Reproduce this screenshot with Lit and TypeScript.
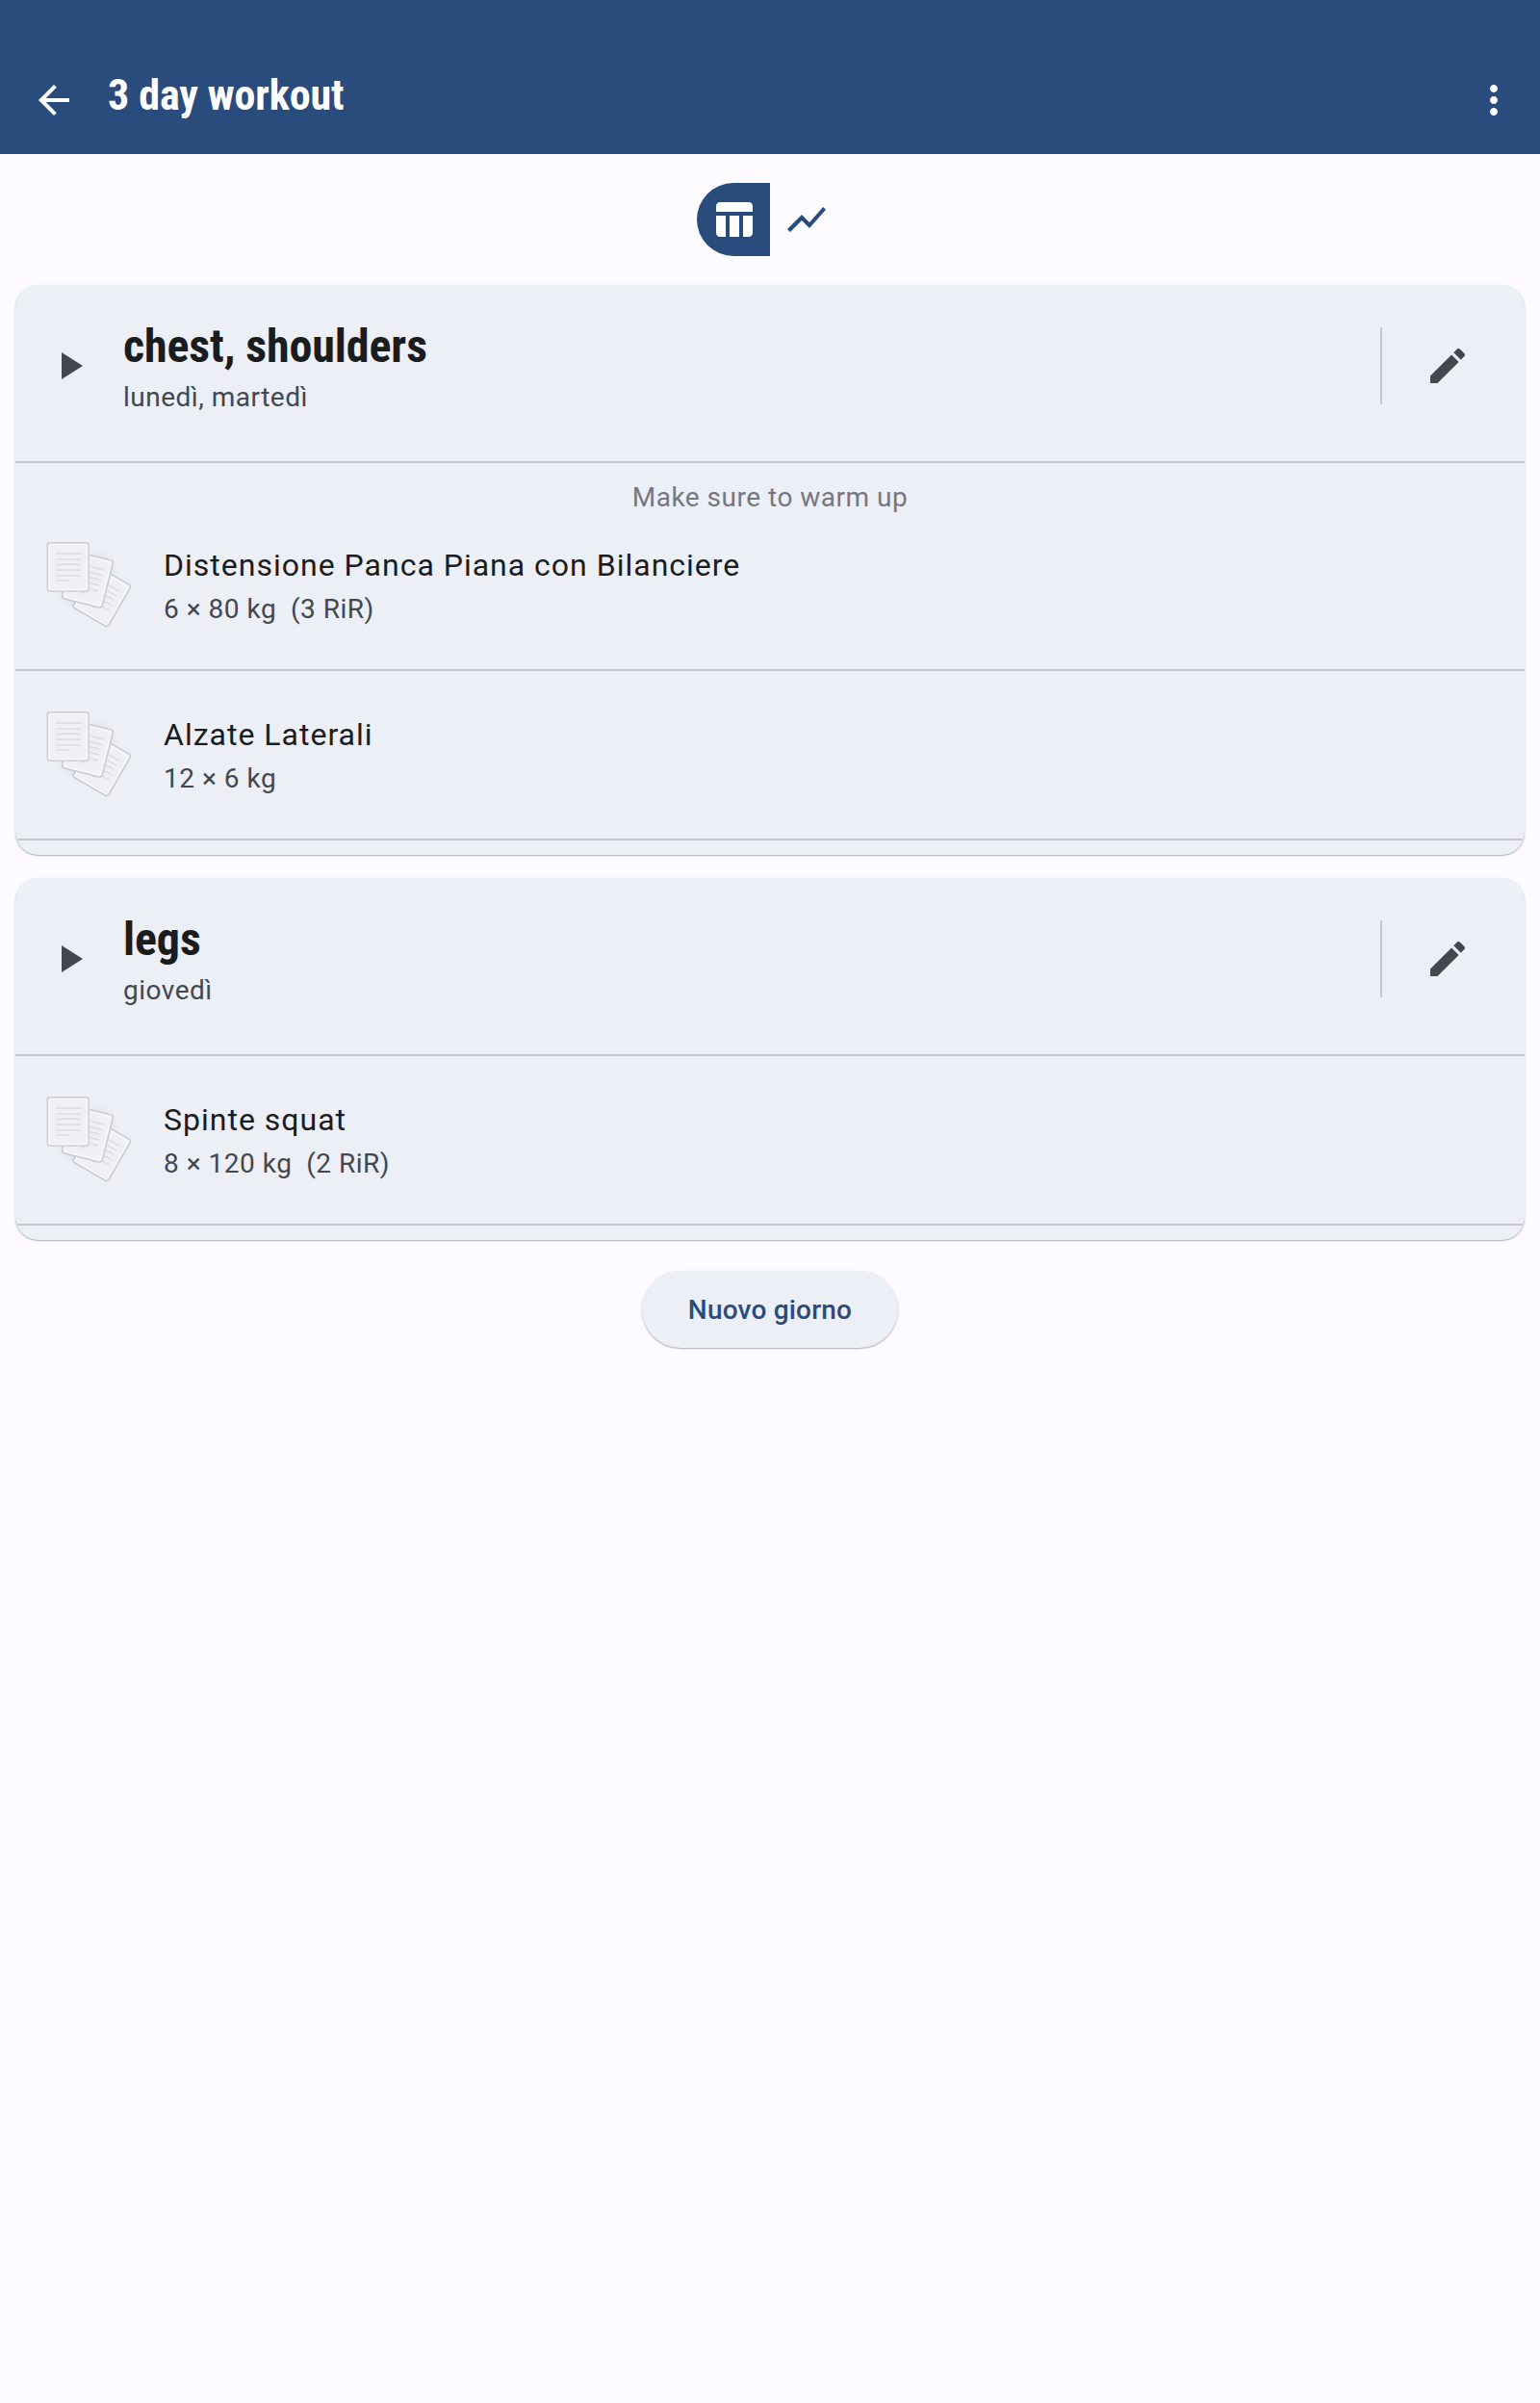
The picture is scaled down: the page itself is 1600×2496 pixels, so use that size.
import { LitElement, html, css, svg, nothing } from "lit";
import { customElement, property } from "lit/decorators.js";

interface Exercise {
  name: string;
  sets: string;
}

interface Day {
  title: string;
  weekdays: string;
  note?: string;
  exercises: Exercise[];
}

const ICONS = {
  back: "M20 11H7.83l5.59-5.59L12 4l-8 8 8 8 1.41-1.41L7.83 13H20v-2z",
  more: "M12 8c1.1 0 2-.9 2-2s-.9-2-2-2-2 .9-2 2 .9 2 2 2zm0 2c-1.1 0-2 .9-2 2s.9 2 2 2 2-.9 2-2-.9-2-2-2zm0 6c-1.1 0-2 .9-2 2s.9 2 2 2 2-.9 2-2-.9-2-2-2z",
  table:
    "M10 10.02h5V21h-5V10.02zM17 21h3c1.1 0 2-.9 2-2v-9h-5v11zm3-18H5c-1.1 0-2 .9-2 2v3h19V5c0-1.1-.9-2-2-2zM3 19c0 1.1.9 2 2 2h3V10H3v9z",
  chart: "M3.5 18.49l6-6.01 4 4L22 6.92l-1.41-1.41-7.09 7.97-4-4L2 16.99z",
  play: "M8 5v14l11-7z",
  edit: "M3 17.25V21h3.75L17.81 9.94l-3.75-3.75L3 17.25zM20.71 7.04c.39-.39.39-1.02 0-1.41l-2.34-2.34c-.39-.39-1.02-.39-1.41 0l-1.83 1.83 3.75 3.75 1.83-1.83z",
};

const icon = (name: keyof typeof ICONS) =>
  html`<svg width="48" height="48" viewBox="0 0 24 24" fill="currentColor"><path d=${ICONS[name]}></path></svg>`;

const DAYS: Day[] = [
  {
    title: "chest, shoulders",
    weekdays: "lunedì, martedì",
    note: "Make sure to warm up",
    exercises: [
      { name: "Distensione Panca Piana con Bilanciere", sets: "6 × 80 kg  (3 RiR)" },
      { name: "Alzate Laterali", sets: "12 × 6 kg" },
    ],
  },
  {
    title: "legs",
    weekdays: "giovedì",
    exercises: [{ name: "Spinte squat", sets: "8 × 120 kg  (2 RiR)" }],
  },
];

/* One sheet of paper, 43 × 51, with six text lines. */
const sheet = (transform: string, border: string) => svg`
  <g transform=${transform}>
    <rect x="0" y="0" width="43" height="50.5" rx="3" fill="#f4f5f8" stroke=${border} stroke-width="1.5"></rect>
    <rect x="3" y="3" width="37" height="44.5" fill="#eff0f3"></rect>
    <path d="M8.5 11.3h26.5M8.5 17.2h26.5M8.5 22.5h26.5M8.5 28.3h26.5M8.5 34.2h26.5M8.5 39.3h13.5"
      stroke="#dcdde1" stroke-width="1.7" fill="none"></path>
  </g>`;

@customElement("exercise-row")
export class ExerciseRow extends LitElement {
  @property({ attribute: false }) exercise!: Exercise;
  @property({ type: Boolean, reflect: true }) compact = false;

  static styles = css`
    :host {
      display: flex;
      gap: 32px;
      box-sizing: border-box;
      height: 176px;
      padding: 41px 32px 0;
      border-bottom: 2px solid #c3c6cf;
    }
    :host([compact]) {
      height: 161px;
      padding-top: 26px;
    }
    .thumb {
      flex: none;
      width: 90px;
      height: 90px;
    }
    .text {
      padding-top: 1px;
    }
    .name {
      font-size: 32px;
      line-height: 48px;
      letter-spacing: 1px;
      color: #1a1c1e;
    }
    .sets {
      margin-top: 2px;
      font-size: 28px;
      line-height: 40px;
      letter-spacing: 0.5px;
      color: #43474e;
      white-space: pre;
    }
  `;

  render() {
    return html`
      <svg class="thumb" viewBox="0 0 90 90">
        <defs>
          <filter id="soft" x="-30%" y="-30%" width="160%" height="160%">
            <feGaussianBlur stdDeviation="4"></feGaussianBlur>
          </filter>
        </defs>
        <path d="M20 20L58 14 72 32 58 70 30 70 14 54z" fill="#5a6270" opacity=".08" filter="url(#soft)"></path>
        ${sheet("translate(52 25.6) rotate(30) scale(.98)", "#c8c9cd")}
        ${sheet("translate(28.2 10.2) rotate(14)", "#c8c9cd")}
        ${sheet("translate(1.2 1.8)", "#cdced2")}
      </svg>
      <div class="text">
        <div class="name">${this.exercise.name}</div>
        <div class="sets">${this.exercise.sets}</div>
      </div>
    `;
  }
}

@customElement("day-card")
export class DayCard extends LitElement {
  @property({ attribute: false }) day!: Day;

  static styles = css`
    :host {
      display: block;
      border-radius: 24px;
      background: #eceff6;
      overflow: hidden;
      padding-bottom: 15px;
      box-shadow: 0 1px 1px rgba(0, 0, 0, 0.22), 0 1px 3px rgba(0, 0, 0, 0.12);
    }
    .head {
      display: flex;
      box-sizing: border-box;
      height: 185px;
      padding: 44px 56px 0 32px;
      border-bottom: 2px solid #c3c6cf;
      color: #43474e;
    }
    .play {
      display: flex;
      align-items: center;
      height: 80px;
      padding-right: 32px;
    }
    .info {
      flex: 1;
      margin-top: -12px;
    }
    .title {
      font: 700 48px/64px "Roboto Condensed", Roboto, sans-serif;
      font-stretch: 75%;
      letter-spacing: -0.1px;
      color: #1a1c1e;
    }
    .weekdays {
      margin-top: 1px;
      font-size: 28px;
      line-height: 40px;
      letter-spacing: 0.5px;
    }
    .edit {
      display: flex;
      align-items: center;
      height: 80px;
      padding-left: 44px;
      border-left: 2px solid #c3c6cf;
    }
    svg {
      display: block;
    }
    .note {
      padding-top: 16px;
      margin-bottom: -1px;
      text-align: center;
      font-size: 28px;
      line-height: 40px;
      letter-spacing: 0.5px;
      color: #74777f;
    }
  `;

  render() {
    const { title, weekdays, note, exercises } = this.day;
    return html`
      <div class="head">
        <div class="play">${icon("play")}</div>
        <div class="info">
          <div class="title">${title}</div>
          <div class="weekdays">${weekdays}</div>
        </div>
        <div class="edit">${icon("edit")}</div>
      </div>
      ${note ? html`<div class="note">${note}</div>` : nothing}
      ${exercises.map(
        (e, i) => html`<exercise-row .exercise=${e} ?compact=${!!note && i === 0}></exercise-row>`
      )}
    `;
  }
}

@customElement("app-root")
export class AppRoot extends LitElement {
  static styles = css`
    :host {
      display: block;
      min-height: 2496px;
      background: #fdfbff;
      font-family: Roboto, sans-serif;
    }
    svg {
      display: block;
    }
    .bar {
      display: flex;
      align-items: flex-start;
      box-sizing: border-box;
      height: 160px;
      padding: 80px 24px 0 32px;
      background: #2a4c7d;
      color: #fff;
    }
    .bar h1 {
      flex: 1;
      margin: -9px 0 0 32px;
      font: 700 44px/56px "Roboto Condensed", Roboto, sans-serif;
      font-stretch: 75%;
      letter-spacing: -0.1px;
    }
    .toggle {
      display: flex;
      justify-content: center;
      padding: 30px 0;
      color: #2a4c7d;
    }
    .toggle span {
      padding: 14px;
    }
    .toggle .on {
      background: #2a4c7d;
      color: #fff;
      border-radius: 38px 0 0 38px;
    }
    .days {
      display: grid;
      gap: 24px;
      padding: 0 16px;
    }
    .footer {
      display: flex;
      justify-content: center;
      padding-top: 32px;
    }
    .new-day {
      height: 80px;
      padding: 2px 48px 0;
      border: 0;
      border-radius: 40px;
      background: #eceff6;
      color: #2a4c7d;
      font: 500 28px/40px Roboto, sans-serif;
      letter-spacing: 0.2px;
      box-shadow: 0 1px 1px rgba(0, 0, 0, 0.22), 0 1px 3px rgba(0, 0, 0, 0.12);
    }
  `;

  render() {
    return html`
      <header class="bar">
        ${icon("back")}
        <h1>3 day workout</h1>
        ${icon("more")}
      </header>
      <div class="toggle">
        <span class="on">${icon("table")}</span>
        <span>${icon("chart")}</span>
      </div>
      <main class="days">${DAYS.map((d) => html`<day-card .day=${d}></day-card>`)}</main>
      <div class="footer"><button class="new-day">Nuovo giorno</button></div>
    `;
  }
}
